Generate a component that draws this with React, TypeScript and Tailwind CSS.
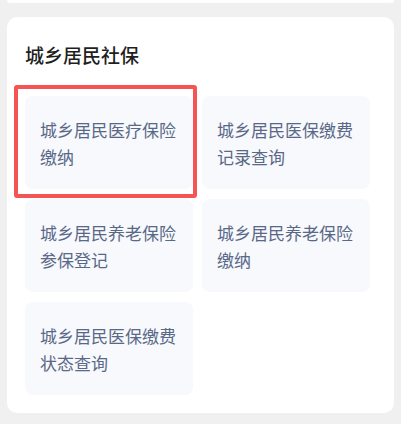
import React from 'react';

const items = [
  '城乡居民医疗保险缴纳',
  '城乡居民医保缴费记录查询',
  '城乡居民养老保险参保登记',
  '城乡居民养老保险缴纳',
  '城乡居民医保缴费状态查询',
];

const App: React.FC = () => {
  return (
    <div
      className="min-h-[424px] bg-[#f0f0f0] px-[7px]"
      style={{ fontFamily: '"Noto Sans CJK SC", "Noto Sans", sans-serif' }}
    >
      {/* tail of the card above */}
      <div className="h-[3px] rounded-b-[4px] bg-white" />

      <section className="mt-[14px] rounded-[10px] bg-white px-[18px] pt-[24px] pb-[18px]">
        <h2 className="text-[19px] leading-[28px] font-medium text-[#1f1f1f]">城乡居民社保</h2>
        <div className="mt-[27px] grid grid-cols-[168px_168px] gap-x-[9px] gap-y-[10px]">
          {items.map((label, i) => (
            <div
              key={label}
              className="relative flex h-[93px] items-center rounded-[8px] bg-[#f7f9fc] px-[15px] text-[17px] leading-[27px] text-[#5a6888]"
            >
              {label}
              {i === 0 && (
                <div className="pointer-events-none absolute top-[-11px] left-[-11px] h-[113px] w-[183px] rounded-[3px] border-4 border-[#f65454]" />
              )}
            </div>
          ))}
        </div>
      </section>
    </div>
  );
};

export default App;
